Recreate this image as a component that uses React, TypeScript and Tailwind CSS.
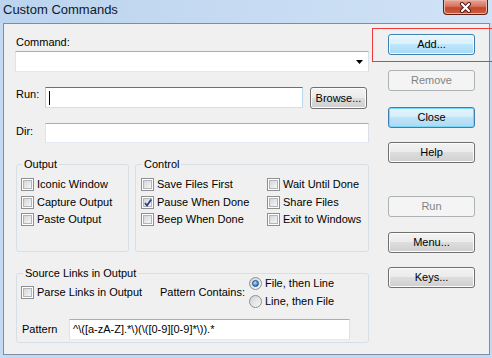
import React from "react";

const btn = {
  normal:
    "border-[#707070] bg-[linear-gradient(#f2f2f2_0%,#ebebeb_49%,#dddddd_50%,#cfcfcf_100%)] shadow-[inset_0_0_0_1px_#fcfcfc] text-black",
  hot: "border-[#3c7fb1] bg-[linear-gradient(#eaf6fd_0%,#d9f0fc_49%,#bee6fd_50%,#a7d9f5_100%)] shadow-[inset_0_0_0_1px_#fcfcfc] text-black",
  focus:
    "border-[#3c7fb1] bg-[linear-gradient(#e5f4fc_0%,#d4edfa_49%,#bde3f7_50%,#b0daf2_100%)] shadow-[inset_0_0_0_1px_#78d6fb] text-black",
  disabled: "border-[#adb2b5] bg-[#f4f4f4] text-[#838383]",
};

type Kind = keyof typeof btn;

function Button({ label, kind = "normal", className = "" }: { label: string; kind?: Kind; className?: string }) {
  return (
    <div
      className={`h-[21px] w-[87px] shrink-0 rounded-[3px] border flex items-center justify-center leading-[13px] ${btn[kind]} ${className}`}
    >
      {label}
    </div>
  );
}

function Check({ checked }: { checked?: boolean }) {
  return (
    <span className="relative w-[13px] h-[13px] shrink-0 border border-[#8e8f8f] bg-white p-[1px]">
      <span className="block w-full h-full border border-[#b1b4b8] bg-[linear-gradient(135deg,#d3d6da,#f6f6f6)]" />
      {checked && (
        <svg className="absolute left-[1px] top-[1px]" width="10" height="10" viewBox="0 0 10 10">
          <path d="M2 5 L4 7.6 L8.2 1.6" fill="none" stroke="#2b3f8f" strokeWidth="1.8" />
        </svg>
      )}
    </span>
  );
}

function CheckRow({ label, checked }: { label: string; checked?: boolean }) {
  return (
    <div className="h-[17.5px] flex items-center gap-[3px] whitespace-nowrap">
      <Check checked={checked} />
      <span className="leading-[13px]">{label}</span>
    </div>
  );
}

function Radio({ label, selected }: { label: string; selected?: boolean }) {
  return (
    <div className="h-[18px] flex items-center gap-[3px] whitespace-nowrap">
      <span className="w-[13px] h-[13px] shrink-0 rounded-full border border-[#8e8f8f] bg-[linear-gradient(135deg,#d0d3d7,#f7f7f7)] flex items-center justify-center">
        {selected && (
          <span className="w-[7px] h-[7px] rounded-full border border-[#1b4f8f] bg-[radial-gradient(circle_at_40%_35%,#b9e2ff,#2a77c9_75%)]" />
        )}
      </span>
      <span className="leading-[13px]">{label}</span>
    </div>
  );
}

const textbox = "bg-white border border-t-[#abadb3] border-l-[#e2e3ea] border-r-[#dbdfe6] border-b-[#e3e9ef]";
const textboxFocus = "bg-white border border-t-[#3d7bad] border-l-[#b5cfe7] border-r-[#b7d9ed] border-b-[#c7e2f1]";

export default function App() {
  return (
    <div className="relative w-[492px] h-[358px] overflow-hidden bg-[#c4daf2] font-['Liberation_Sans',Arial,sans-serif] text-[11px] text-black flex flex-col">
      {/* title bar */}
      <div className="h-[23px] shrink-0 flex items-start bg-[linear-gradient(90deg,#bcd4ee,#d0e2f6)]">
        <span className="pl-[3px] pt-[2px] text-[13px] leading-[16px] text-[#0b1a2e]">Custom Commands</span>
        <div className="ml-auto mr-[4px] w-[45px] h-[15px] rounded-b-[4px] border border-t-0 border-[#5e2016] bg-[linear-gradient(#e8a698_0%,#d7735e_45%,#c4472d_55%,#cf5d3f_100%)] shadow-[inset_0_0_0_1px_#eab3a6] flex items-center justify-center">
          <svg width="13" height="11" viewBox="0 0 13 11">
            <path d="M3 2 L10 9 M10 2 L3 9" stroke="#4b1810" strokeWidth="4" strokeLinecap="round" />
            <path d="M3 2 L10 9 M10 2 L3 9" stroke="#ffffff" strokeWidth="2.2" strokeLinecap="round" />
          </svg>
        </div>
      </div>

      {/* client area */}
      <div className="flex-1 ml-[3px] mr-[2px] mb-[3px] border border-[#7b8ea5] bg-[#f0f0f0] flex pl-[11px]">
        <div className="w-[354px] shrink-0 pt-[12px] flex flex-col">
          <span className="pl-[1px] leading-[13px]">Command:</span>
          <div className={`mt-[2px] h-[21px] ${textbox} flex items-center justify-end pr-[5px]`}>
            <svg width="7" height="4" viewBox="0 0 7 4">
              <polygon points="0,0 7,0 3.5,4" fill="#000" />
            </svg>
          </div>

          <div className="mt-[15px] flex items-start">
            <span className="w-[30px] pl-[1px] mt-[1px] leading-[13px]">Run:</span>
            <div className={`w-[258px] h-[21px] ${textboxFocus} flex items-center pl-[3px]`}>
              <span className="w-px h-[14px] bg-black" />
            </div>
            <Button label="Browse..." className="ml-[7px] !w-[57px] !h-[22px]" />
          </div>

          <div className="mt-[14px] flex items-start">
            <span className="w-[30px] pl-[1px] mt-[2px] leading-[13px]">Dir:</span>
            <div className={`w-[324px] h-[20px] ${textbox}`} />
          </div>

          <div className="mt-[15px] ml-[1px] flex gap-[6px]">
            <fieldset className="w-[113px] h-[94px] border border-[#d5dfe5] rounded-[3px] pl-[4px] pt-[6px]">
              <legend className="ml-[1px] px-[2px] leading-[12px]">Output</legend>
              <CheckRow label="Iconic Window" />
              <CheckRow label="Capture Output" />
              <CheckRow label="Paste Output" />
            </fieldset>
            <fieldset className="flex-1 h-[94px] border border-[#d5dfe5] rounded-[3px] pl-[5px] pt-[6px]">
              <legend className="ml-[1px] px-[2px] leading-[12px]">Control</legend>
              <div className="flex">
                <div className="w-[126px]">
                  <CheckRow label="Save Files First" />
                  <CheckRow label="Pause When Done" checked />
                  <CheckRow label="Beep When Done" />
                </div>
                <div>
                  <CheckRow label="Wait Until Done" />
                  <CheckRow label="Share Files" />
                  <CheckRow label="Exit to Windows" />
                </div>
              </div>
            </fieldset>
          </div>

          <fieldset className="mt-[15px] ml-[1px] h-[76px] border border-[#d5dfe5] rounded-[3px] pl-[4px]">
            <legend className="ml-[2px] px-[2px] leading-[12px]">Source Links in Output</legend>
            <div className="flex items-start">
              <div className="w-[139px] h-[26px] flex items-center gap-[3px] whitespace-nowrap">
                <Check />
                <span className="leading-[13px]">Parse Links in Output</span>
              </div>
              <div className="w-[89px] h-[26px] flex items-center whitespace-nowrap">Pattern Contains:</div>
              <div className="-mt-[5px]">
                <Radio label="File, then Line" selected />
                <Radio label="Line, then File" />
              </div>
            </div>
            <div className="mt-[9px] flex items-center">
              <span className="w-[48px] pl-[1px] leading-[13px]">Pattern</span>
              <div className={`w-[281px] h-[21px] ${textbox} flex items-center pl-[3px] whitespace-nowrap`}>
                {"^\\([a-zA-Z].*\\)(\\([0-9][0-9]*\\)).*"}
              </div>
            </div>
          </fieldset>
        </div>

        <div className="ml-[19px] pt-[10px] flex flex-col">
          <Button label="Add..." kind="hot" />
          <Button label="Remove" kind="disabled" className="mt-[15px]" />
          <Button label="Close" kind="focus" className="mt-[16px]" />
          <Button label="Help" className="mt-[14px]" />
          <Button label="Run" kind="disabled" className="mt-[33px]" />
          <Button label="Menu..." className="mt-[15px]" />
          <Button label="Keys..." className="mt-[14px]" />
        </div>
      </div>

      {/* red highlight annotation */}
      <div className="absolute left-[372px] top-[28px] w-[130px] h-[34px] border border-[#f03a3a]" />
    </div>
  );
}
